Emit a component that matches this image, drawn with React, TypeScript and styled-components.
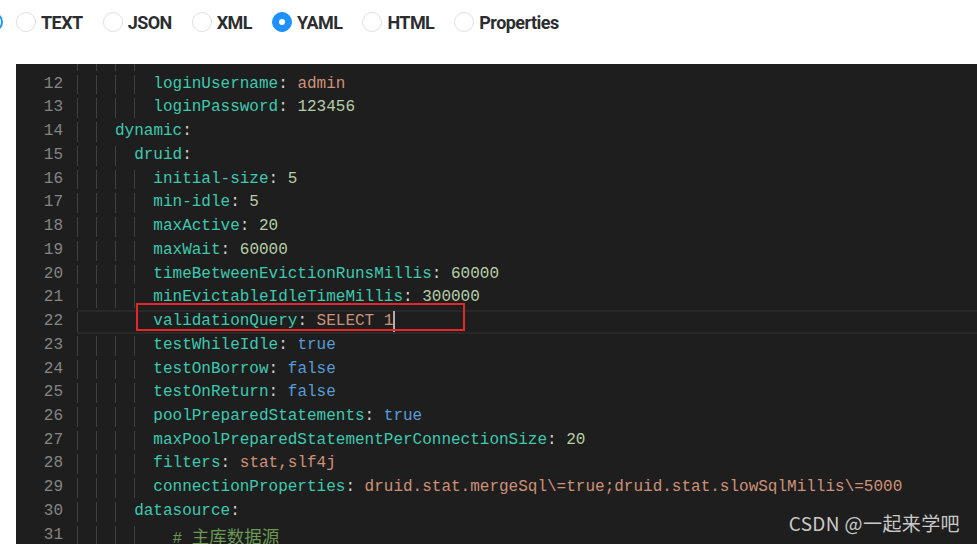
import React from 'react';
import styled, { createGlobalStyle } from 'styled-components';

const GlobalStyle = createGlobalStyle`
  html, body {
    margin: 0;
    padding: 0;
    background: #ffffff;
    overflow: hidden;
  }
`;

const Page = styled.div`
  width: 977px;
  height: 544px;
  overflow: hidden;
`;

const TopBar = styled.div`
  height: 64px;
  display: flex;
  align-items: flex-start;
  padding-top: 12px;
  box-sizing: border-box;
  font-family: Roboto, 'Liberation Sans', sans-serif;
`;

const Lead = styled.span`
  width: 3px;
  height: 20px;
  overflow: hidden;
  margin-right: 13px;
  display: flex;
  justify-content: flex-end;
  &::before {
    content: '';
    flex: none;
    width: 20px;
    height: 20px;
    box-sizing: border-box;
    border-radius: 50%;
    border: 2px solid #1e90ff;
  }
`;

const RadioItem = styled.label`
  display: flex;
  align-items: center;
  height: 20px;
  margin-right: 20px;
  cursor: pointer;
`;

const Circle = styled.span<{ checked: boolean }>`
  width: 20px;
  height: 20px;
  box-sizing: border-box;
  border-radius: 50%;
  border: 1px solid ${({ checked }) => (checked ? '#1e90ff' : '#dcdfe6')};
  background: ${({ checked }) => (checked ? '#1e90ff' : '#fff')};
  display: flex;
  align-items: center;
  justify-content: center;
  margin-right: 5px;
  &::after {
    content: '';
    width: 6px;
    height: 6px;
    border-radius: 50%;
    background: #fff;
    display: ${({ checked }) => (checked ? 'block' : 'none')};
  }
`;

const RadioText = styled.span`
  font-size: 18px;
  font-weight: 700;
  color: #2b2d30;
  letter-spacing: -0.55px;
`;

const Editor = styled.div`
  position: relative;
  margin-left: 16px;
  height: 480px;
  background: #1e1e1e;
  overflow: hidden;
  font-family: 'Liberation Mono', 'Noto Sans CJK SC', monospace;
  font-size: 16px;
`;

const Lines = styled.div`
  margin-top: -15px;
`;

const Line = styled.div`
  display: flex;
  height: 23.74px;
  line-height: 23.74px;
`;

const LineNo = styled.div`
  width: 47px;
  flex: none;
  text-align: right;
  color: #858585;
`;

const Code = styled.div<{ active?: boolean }>`
  flex: 1;
  margin-left: 13.6px;
  white-space: pre;
  display: flex;
  align-items: stretch;
  box-sizing: border-box;
  border-top: 2px solid ${({ active }) => (active ? '#282828' : 'transparent')};
  border-bottom: 2px solid ${({ active }) => (active ? '#282828' : 'transparent')};
  line-height: 19.74px;
`;

const Indent = styled.span<{ guide: boolean }>`
  display: inline-block;
  width: 19.2px;
  flex: none;
  box-sizing: border-box;
  border-left: 1px solid ${({ guide }) => (guide ? '#404040' : 'transparent')};
`;

const Text = styled.span`
  display: flex;
  align-items: flex-start;
  height: 19.74px;
`;

const Key = styled.span`
  color: #3dc9b0;
`;
const Punct = styled.span`
  color: #d4d4d4;
`;
const Str = styled.span`
  color: #ce9178;
`;
const Num = styled.span`
  color: #b5cea8;
`;
const Bool = styled.span`
  color: #569cd6;
`;
const Comment = styled.span`
  color: #6a9955;
`;
const Cjk = styled.span`
  font-family: 'Noto Sans CJK SC', sans-serif;
  font-size: 17.5px;
`;

const Caret = styled.span`
  flex: none;
  width: 2px;
  height: 21px;
  margin-top: -1px;
  background: #aeafad;
`;

const Highlight = styled.div`
  position: absolute;
  left: 120px;
  top: 239px;
  width: 329px;
  height: 28px;
  box-sizing: border-box;
  border: 2px solid #e5262b;
`;

const Watermark = styled.div`
  position: absolute;
  right: 17px;
  bottom: 8px;
  font-family: 'Noto Sans CJK SC', 'Liberation Sans', sans-serif;
  font-size: 19px;
  letter-spacing: 0.4px;
  color: #c9c9c9;
`;

type Kind = 'str' | 'num' | 'bool';

type Row = {
  no: number;
  indent: number;
  guides?: number;
  key?: string;
  value?: string;
  kind?: Kind;
  comment?: string;
  active?: boolean;
};

const rows: Row[] = [
  { no: 11, indent: 8, key: 'enabled', value: 'true', kind: 'bool' },
  { no: 12, indent: 8, key: 'loginUsername', value: 'admin', kind: 'str' },
  { no: 13, indent: 8, key: 'loginPassword', value: '123456', kind: 'num' },
  { no: 14, indent: 4, key: 'dynamic' },
  { no: 15, indent: 6, key: 'druid' },
  { no: 16, indent: 8, key: 'initial-size', value: '5', kind: 'num' },
  { no: 17, indent: 8, key: 'min-idle', value: '5', kind: 'num' },
  { no: 18, indent: 8, key: 'maxActive', value: '20', kind: 'num' },
  { no: 19, indent: 8, key: 'maxWait', value: '60000', kind: 'num' },
  { no: 20, indent: 8, key: 'timeBetweenEvictionRunsMillis', value: '60000', kind: 'num' },
  { no: 21, indent: 8, key: 'minEvictableIdleTimeMillis', value: '300000', kind: 'num' },
  { no: 22, indent: 8, guides: 1, key: 'validationQuery', value: 'SELECT 1', kind: 'str', active: true },
  { no: 23, indent: 8, key: 'testWhileIdle', value: 'true', kind: 'bool' },
  { no: 24, indent: 8, key: 'testOnBorrow', value: 'false', kind: 'bool' },
  { no: 25, indent: 8, key: 'testOnReturn', value: 'false', kind: 'bool' },
  { no: 26, indent: 8, key: 'poolPreparedStatements', value: 'true', kind: 'bool' },
  { no: 27, indent: 8, key: 'maxPoolPreparedStatementPerConnectionSize', value: '20', kind: 'num' },
  { no: 28, indent: 8, key: 'filters', value: 'stat,slf4j', kind: 'str' },
  {
    no: 29,
    indent: 8,
    key: 'connectionProperties',
    value: 'druid.stat.mergeSql\\=true;druid.stat.slowSqlMillis\\=5000',
    kind: 'str',
  },
  { no: 30, indent: 6, key: 'datasource' },
  { no: 31, indent: 10, guides: 4, comment: '主库数据源' },
];

const formats = ['TEXT', 'JSON', 'XML', 'YAML', 'HTML', 'Properties'];

const Value = ({ kind, children }: { kind?: Kind; children: React.ReactNode }) => {
  if (kind === 'num') return <Num>{children}</Num>;
  if (kind === 'bool') return <Bool>{children}</Bool>;
  return <Str>{children}</Str>;
};

const CodeLine = ({ row }: { row: Row }) => {
  const levels = row.indent / 2;
  const guideCount = row.guides ?? Math.min(levels, 4);
  return (
    <Line>
      <LineNo>{row.no}</LineNo>
      <Code active={row.active}>
        {Array.from({ length: levels }).map((_, i) => (
          <Indent key={i} guide={i < guideCount} />
        ))}
        <Text>
          {row.comment ? (
            <Comment>
              # <Cjk>{row.comment}</Cjk>
            </Comment>
          ) : (
            <>
              <Key>{row.key}</Key>
              <Punct>:</Punct>
              {row.value && <Value kind={row.kind}>{' ' + row.value}</Value>}
              {row.active && <Caret />}
            </>
          )}
        </Text>
      </Code>
    </Line>
  );
};

export default function App() {
  return (
    <Page>
      <GlobalStyle />
      <TopBar>
        <Lead />
        {formats.map((f) => (
          <RadioItem key={f}>
            <Circle checked={f === 'YAML'} />
            <RadioText>{f}</RadioText>
          </RadioItem>
        ))}
      </TopBar>
      <Editor>
        <Lines>
          {rows.map((r) => (
            <CodeLine key={r.no} row={r} />
          ))}
        </Lines>
        <Highlight />
        <Watermark>CSDN @一起来学吧</Watermark>
      </Editor>
    </Page>
  );
}
